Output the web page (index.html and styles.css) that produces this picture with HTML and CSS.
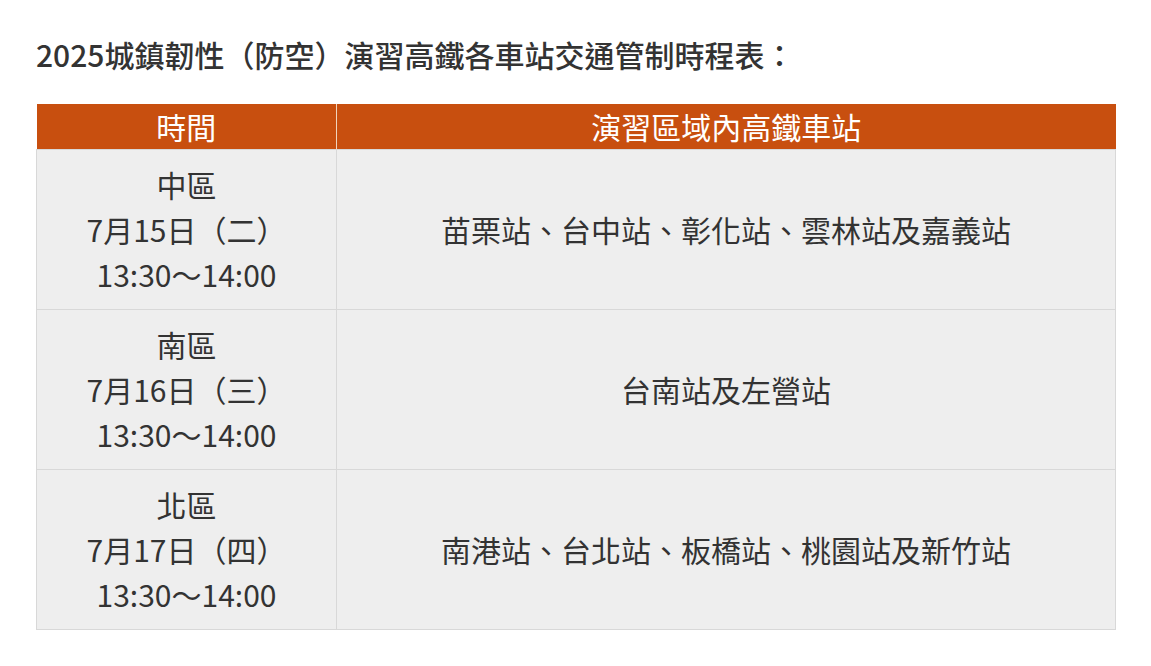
FILE: index.html
```html
<!DOCTYPE html>
<html lang="zh-Hant">
<head>
<meta charset="utf-8">
<title>2025城鎮韌性（防空）演習高鐵各車站交通管制時程表</title>
<link rel="stylesheet" href="styles.css">
</head>
<body>
<main class="page">
  <h2 class="title">2025城鎮韌性（防空）演習高鐵各車站交通管制時程表：</h2>
  <table class="schedule">
    <colgroup>
      <col class="col-time">
      <col class="col-station">
    </colgroup>
    <thead>
      <tr>
        <th>時間</th>
        <th>演習區域內高鐵車站</th>
      </tr>
    </thead>
    <tbody>
      <tr>
        <td>中區<br>7月15日（二）<br>13:30～14:00</td>
        <td>苗栗站、台中站、彰化站、雲林站及嘉義站</td>
      </tr>
      <tr>
        <td>南區<br>7月16日（三）<br>13:30～14:00</td>
        <td>台南站及左營站</td>
      </tr>
      <tr>
        <td>北區<br>7月17日（四）<br>13:30～14:00</td>
        <td>南港站、台北站、板橋站、桃園站及新竹站</td>
      </tr>
    </tbody>
  </table>
</main>
</body>
</html>
```

FILE: styles.css
```css
html, body {
  margin: 0;
  padding: 0;
  background: #ffffff;
}

body {
  font-family: "Noto Sans CJK TC", "Noto Sans CJK SC", "Noto Sans", sans-serif;
  color: #333333;
}

.page {
  padding: 34px 36px 0 36px;
}

.title {
  margin: 0 0 30px 0;
  font-size: 30px;
  line-height: 40px;
  font-weight: 500;
  color: #333333;
}

.schedule {
  width: 1080px;
  border-collapse: collapse;
  table-layout: fixed;
}

.col-time {
  width: 300px;
}

.schedule th {
  background: #c84f0f;
  color: #ffffff;
  font-weight: 400;
  font-size: 30px;
  line-height: 45px;
  height: 45px;
  padding: 0;
  text-align: center;
  border-left: 1px solid #f0d4bd;
}

.schedule th:first-child {
  border-left: none;
}

.schedule td {
  background: #eeeeee;
  font-size: 30px;
  line-height: 45px;
  padding: 12px 0 12px 0;
  height: 135px;
  text-align: center;
  vertical-align: middle;
  border: 1px solid #d8d8d8;
}
```
